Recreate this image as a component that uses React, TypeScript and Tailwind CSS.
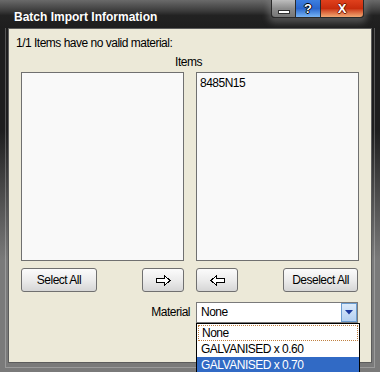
import React from 'react';

const font = { fontFamily: '"Liberation Sans", Arial, sans-serif' };

function ArrowIcon({ dir }: { dir: 'left' | 'right' }) {
  return (
    <svg width="15" height="11" viewBox="0 0 15 11" className={dir === 'left' ? 'rotate-180' : ''} shapeRendering="crispEdges">
      <polygon points="0.5,3.5 8.5,3.5 8.5,0.5 14,5.5 8.5,10.5 8.5,7.5 0.5,7.5" fill="#fff" stroke="#000" strokeWidth="1" />
    </svg>
  );
}

function Button({ children, className = '' }: { children: React.ReactNode; className?: string }) {
  return (
    <div
      className={`h-[24px] flex items-center justify-center rounded-[3px] border border-[#707070] bg-gradient-to-b from-[#fbfbfb] via-[#ececec] to-[#d6d6d6] text-black ${className}`}
    >
      {children}
    </div>
  );
}

function CaptionButtons() {
  return (
    <div className="flex h-[18px] rounded-b-[4px] border border-t-0 border-[#2a2a2a] overflow-hidden shadow-[0_2px_6px_3px_rgba(150,150,150,0.4)]">
      <div className="w-[24px] flex items-end justify-center pb-[3px] bg-gradient-to-b from-[#bdbdbd] via-[#8c8c8c] to-[#767676] border-r border-[#2a2a2a]">
        <div className="w-[12px] h-[4px] bg-white border border-[#303030]" />
      </div>
      <div className="w-[25px] flex items-center justify-center bg-gradient-to-b from-[#3d7fe0] via-[#2a66cc] to-[#78b4f4] border-r border-[#2a2a2a]">
        <span
          className="text-white font-bold text-[13px] leading-none"
          style={{ textShadow: '1px 0 #000, -1px 0 #000, 0 1px #000, 0 -1px #000' }}
        >
          ?
        </span>
      </div>
      <div className="w-[42px] flex items-center justify-center bg-gradient-to-b from-[#e0401c] via-[#c82c0c] to-[#f2a872]">
        <span
          className="text-white font-bold text-[13px] leading-none"
          style={{ textShadow: '1px 0 #7a1a00, -1px 0 #7a1a00, 0 1px #7a1a00, 0 -1px #7a1a00' }}
        >
          X
        </span>
      </div>
    </div>
  );
}

export default function App() {
  return (
    <div
      className="w-[380px] h-[372px] flex flex-col overflow-hidden bg-[linear-gradient(to_bottom,#1e1e1e_0%,#1e1e1e_35%,#7a7a7a_70%,#7a7a7a_100%)]"
      style={font}
    >
      {/* title bar */}
      <div className="h-[28px] shrink-0 flex items-start justify-between bg-[linear-gradient(to_bottom,#6a6a6a_0%,#3a3a3a_40%,#222222_55%,#1e1e1e_100%)]">
        <div className="pl-[14px] pt-[10px] text-white font-bold text-[12px] leading-[15px]">Batch Import Information</div>
        <div className="mr-[16px]">
          <CaptionButtons />
        </div>
      </div>

      {/* frame + client */}
      <div className="flex-1 flex mx-[5px] mb-[4px] border-x border-b border-white/25 px-[2px] pb-[4px]">
        <div className="relative flex-1 flex flex-col border border-[#5c5c5c] bg-[#ece9d8] text-[12px] tracking-[-0.5px] text-black">
          <div className="pl-[7px] pt-[7px] leading-[15px]">1/1 Items have no valid material:</div>

          <div className="pl-[12px] pt-[4px]">
            <div className="w-[338px] text-center leading-[15px] pr-[3px]">Items</div>

            <div className="mt-[2px] grid grid-cols-[163px_163px] gap-x-[12px]">
              <div className="h-[189px] border border-[#707070] bg-[#f9f9f9]" />
              <div className="h-[189px] border border-[#707070] bg-[#f9f9f9] px-[3px] pt-[3px] leading-[15px]">8485N15</div>
            </div>

            <div className="mt-[7px] grid grid-cols-[163px_163px] gap-x-[12px]">
              <div className="flex justify-between">
                <Button className="w-[76px]">Select All</Button>
                <Button className="w-[42px]">
                  <ArrowIcon dir="right" />
                </Button>
              </div>
              <div className="flex justify-between pr-[1px]">
                <Button className="w-[42px]">
                  <ArrowIcon dir="left" />
                </Button>
                <Button className="w-[75px]">Deselect All</Button>
              </div>
            </div>

            <div className="mt-[10px] grid grid-cols-[163px_163px] gap-x-[12px]">
              <div className="flex justify-end items-center">
                <span className="mr-[-6px] leading-[15px]">Material</span>
              </div>
              <div className="relative w-[162px]">
                <div className="h-[21px] flex items-center border border-[#7a7a7a] bg-white">
                  <span className="flex-1 pl-[4px] leading-[15px]">None</span>
                  <div className="w-[16px] h-[19px] flex items-center justify-center border border-[#6a9cd0] bg-gradient-to-b from-[#dcebfb] to-[#b4cff0]">
                    <svg width="8" height="5" viewBox="0 0 8 5">
                      <polygon points="0,0 8,0 4,4.5" fill="#1c3aa0" />
                    </svg>
                  </div>
                </div>

                {/* open dropdown list */}
                <div className="absolute left-0 top-[21px] w-[164px] h-[60px] border border-black bg-white z-10">
                  <div className="mx-[1px] mt-[1px] h-[16px] flex items-center border border-dotted border-[#c08040] pl-[3px] leading-[15px]">
                    None
                  </div>
                  <div className="h-[16px] flex items-center pl-[4px] leading-[15px]">GALVANISED x 0.60</div>
                  <div className="h-[16px] flex items-center pl-[4px] leading-[15px] bg-[#316ac5] text-white">
                    GALVANISED x 0.70
                  </div>
                </div>
              </div>
            </div>
          </div>
        </div>
      </div>
    </div>
  );
}
